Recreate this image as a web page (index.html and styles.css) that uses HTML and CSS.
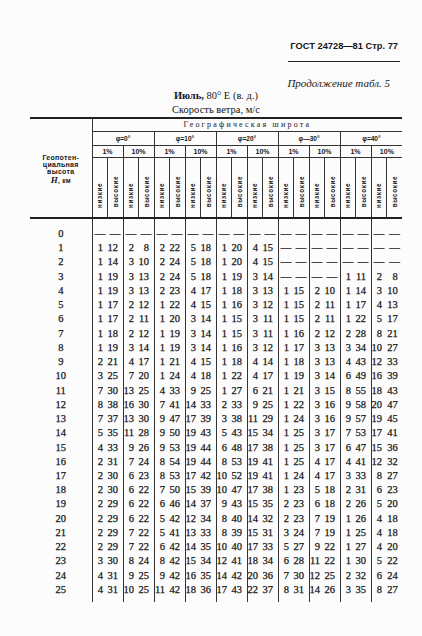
FILE: index.html
```html
<!DOCTYPE html>
<html lang="ru">
<head>
<meta charset="utf-8">
<link rel="stylesheet" href="styles.css">
</head>
<body>
<div class="page">
  <div class="runhead"><span class="gost">ГОСТ 24728—81 Стр. 77</span></div>
  <p class="cont">Продолжение табл. 5</p>
  <p class="caption title"><b>Июль,</b> 80° Е (в. д.)</p>
  <p class="caption">Скорость ветра, м/с</p>
  <table class="data">
    <colgroup>
      <col class="c0">
      <col><col><col><col><col><col><col><col><col><col>
      <col><col><col><col><col><col><col><col><col><col>
    </colgroup>
    <thead>
      <tr class="geo-row"><th class="hcol" rowspan="4">Геопотен-<br>циальная<br>высота<br><span class="h"><i>H</i>, км</span></th><th class="geo" colspan="20">Географическая широта</th></tr>
      <tr class="phi"><th colspan="4">φ=0°</th><th colspan="4">φ=10°</th><th colspan="4">φ=20°</th><th colspan="4">φ—30°</th><th colspan="4">φ=40°</th></tr>
      <tr class="pct"><th colspan="2">1%</th><th colspan="2">10%</th><th colspan="2">1%</th><th colspan="2">10%</th><th colspan="2">1%</th><th colspan="2">10%</th><th colspan="2">1%</th><th colspan="2">10%</th><th colspan="2">1%</th><th colspan="2">10%</th></tr>
      <tr class="rot">
        <th><span>низкие</span></th><th><span>высокие</span></th><th><span>низкие</span></th><th><span>высокие</span></th>
        <th><span>низкие</span></th><th><span>высокие</span></th><th><span>низкие</span></th><th><span>высокие</span></th>
        <th><span>низкие</span></th><th><span>высокие</span></th><th><span>низкие</span></th><th><span>высокие</span></th>
        <th><span>низкие</span></th><th><span>высокие</span></th><th><span>низкие</span></th><th><span>высокие</span></th>
        <th><span>низкие</span></th><th><span>высокие</span></th><th><span>низкие</span></th><th><span>высокие</span></th>
      </tr>
    </thead>
    <tbody>
      <tr class="first"><td>0</td><td class="d">—</td><td class="d">—</td><td class="d">—</td><td class="d">—</td><td class="d">—</td><td class="d">—</td><td class="d">—</td><td class="d">—</td><td class="d">—</td><td class="d">—</td><td class="d">—</td><td class="d">—</td><td class="d">—</td><td class="d">—</td><td class="d">—</td><td class="d">—</td><td class="d">—</td><td class="d">—</td><td class="d">—</td><td class="d">—</td></tr>
      <tr><td>1</td><td>1</td><td>12</td><td>2</td><td>8</td><td>2</td><td>22</td><td>5</td><td>18</td><td>1</td><td>20</td><td>4</td><td>15</td><td class="d">—</td><td class="d">—</td><td class="d">—</td><td class="d">—</td><td class="d">—</td><td class="d">—</td><td class="d">—</td><td class="d">—</td></tr>
      <tr><td>2</td><td>1</td><td>14</td><td>3</td><td>10</td><td>2</td><td>24</td><td>5</td><td>18</td><td>1</td><td>20</td><td>4</td><td>15</td><td class="d">—</td><td class="d">—</td><td class="d">—</td><td class="d">—</td><td class="d">—</td><td class="d">—</td><td class="d">—</td><td class="d">—</td></tr>
      <tr><td>3</td><td>1</td><td>19</td><td>3</td><td>13</td><td>2</td><td>24</td><td>5</td><td>18</td><td>1</td><td>19</td><td>3</td><td>14</td><td class="d">—</td><td class="d">—</td><td class="d">—</td><td class="d">—</td><td>1</td><td>11</td><td>2</td><td>8</td></tr>
      <tr><td>4</td><td>1</td><td>19</td><td>3</td><td>13</td><td>2</td><td>23</td><td>4</td><td>17</td><td>1</td><td>18</td><td>3</td><td>13</td><td>1</td><td>15</td><td>2</td><td>10</td><td>1</td><td>14</td><td>3</td><td>10</td></tr>
      <tr><td>5</td><td>1</td><td>17</td><td>2</td><td>12</td><td>1</td><td>22</td><td>4</td><td>15</td><td>1</td><td>16</td><td>3</td><td>12</td><td>1</td><td>15</td><td>2</td><td>11</td><td>1</td><td>17</td><td>4</td><td>13</td></tr>
      <tr><td>6</td><td>1</td><td>17</td><td>2</td><td>11</td><td>1</td><td>20</td><td>3</td><td>14</td><td>1</td><td>15</td><td>3</td><td>11</td><td>1</td><td>15</td><td>2</td><td>11</td><td>1</td><td>22</td><td>5</td><td>17</td></tr>
      <tr><td>7</td><td>1</td><td>18</td><td>2</td><td>12</td><td>1</td><td>19</td><td>3</td><td>14</td><td>1</td><td>15</td><td>3</td><td>11</td><td>1</td><td>16</td><td>2</td><td>12</td><td>2</td><td>28</td><td>8</td><td>21</td></tr>
      <tr><td>8</td><td>1</td><td>19</td><td>3</td><td>14</td><td>1</td><td>19</td><td>3</td><td>14</td><td>1</td><td>16</td><td>3</td><td>12</td><td>1</td><td>17</td><td>3</td><td>13</td><td>3</td><td>34</td><td>10</td><td>27</td></tr>
      <tr><td>9</td><td>2</td><td>21</td><td>4</td><td>17</td><td>1</td><td>21</td><td>4</td><td>15</td><td>1</td><td>18</td><td>4</td><td>14</td><td>1</td><td>18</td><td>3</td><td>13</td><td>4</td><td>43</td><td>12</td><td>33</td></tr>
      <tr><td>10</td><td>3</td><td>25</td><td>7</td><td>20</td><td>1</td><td>24</td><td>4</td><td>18</td><td>1</td><td>22</td><td>4</td><td>17</td><td>1</td><td>19</td><td>3</td><td>14</td><td>6</td><td>49</td><td>16</td><td>39</td></tr>
      <tr><td>11</td><td>7</td><td>30</td><td>13</td><td>25</td><td>4</td><td>33</td><td>9</td><td>25</td><td>1</td><td>27</td><td>6</td><td>21</td><td>1</td><td>21</td><td>3</td><td>15</td><td>8</td><td>55</td><td>18</td><td>43</td></tr>
      <tr><td>12</td><td>8</td><td>38</td><td>16</td><td>30</td><td>7</td><td>41</td><td>14</td><td>33</td><td>2</td><td>33</td><td>9</td><td>25</td><td>1</td><td>22</td><td>3</td><td>16</td><td>9</td><td>58</td><td>20</td><td>47</td></tr>
      <tr><td>13</td><td>7</td><td>37</td><td>13</td><td>30</td><td>9</td><td>47</td><td>17</td><td>39</td><td>3</td><td>38</td><td>11</td><td>29</td><td>1</td><td>24</td><td>3</td><td>16</td><td>9</td><td>57</td><td>19</td><td>45</td></tr>
      <tr><td>14</td><td>5</td><td>35</td><td>11</td><td>28</td><td>9</td><td>50</td><td>19</td><td>43</td><td>5</td><td>43</td><td>15</td><td>34</td><td>1</td><td>25</td><td>3</td><td>17</td><td>7</td><td>53</td><td>17</td><td>41</td></tr>
      <tr><td>15</td><td>4</td><td>33</td><td>9</td><td>26</td><td>9</td><td>53</td><td>19</td><td>44</td><td>6</td><td>48</td><td>17</td><td>38</td><td>1</td><td>25</td><td>3</td><td>17</td><td>6</td><td>47</td><td>15</td><td>36</td></tr>
      <tr><td>16</td><td>2</td><td>31</td><td>7</td><td>24</td><td>8</td><td>54</td><td>19</td><td>44</td><td>8</td><td>53</td><td>19</td><td>41</td><td>1</td><td>25</td><td>4</td><td>17</td><td>4</td><td>41</td><td>12</td><td>32</td></tr>
      <tr><td>17</td><td>2</td><td>30</td><td>6</td><td>23</td><td>8</td><td>53</td><td>17</td><td>42</td><td>10</td><td>52</td><td>19</td><td>41</td><td>1</td><td>24</td><td>4</td><td>17</td><td>3</td><td>33</td><td>8</td><td>27</td></tr>
      <tr><td>18</td><td>2</td><td>30</td><td>6</td><td>22</td><td>7</td><td>50</td><td>15</td><td>39</td><td>10</td><td>47</td><td>17</td><td>38</td><td>1</td><td>23</td><td>5</td><td>18</td><td>2</td><td>31</td><td>6</td><td>23</td></tr>
      <tr><td>19</td><td>2</td><td>29</td><td>6</td><td>22</td><td>6</td><td>46</td><td>14</td><td>37</td><td>9</td><td>43</td><td>15</td><td>35</td><td>2</td><td>23</td><td>6</td><td>18</td><td>2</td><td>26</td><td>5</td><td>20</td></tr>
      <tr><td>20</td><td>2</td><td>29</td><td>6</td><td>22</td><td>5</td><td>42</td><td>12</td><td>34</td><td>8</td><td>40</td><td>14</td><td>32</td><td>2</td><td>23</td><td>7</td><td>19</td><td>1</td><td>26</td><td>4</td><td>18</td></tr>
      <tr><td>21</td><td>2</td><td>29</td><td>7</td><td>22</td><td>5</td><td>41</td><td>13</td><td>33</td><td>8</td><td>39</td><td>15</td><td>31</td><td>3</td><td>24</td><td>7</td><td>19</td><td>1</td><td>25</td><td>4</td><td>18</td></tr>
      <tr><td>22</td><td>2</td><td>29</td><td>7</td><td>22</td><td>6</td><td>42</td><td>14</td><td>35</td><td>10</td><td>40</td><td>17</td><td>33</td><td>5</td><td>27</td><td>9</td><td>22</td><td>1</td><td>27</td><td>4</td><td>20</td></tr>
      <tr><td>23</td><td>3</td><td>30</td><td>8</td><td>24</td><td>8</td><td>42</td><td>15</td><td>34</td><td>12</td><td>41</td><td>18</td><td>34</td><td>6</td><td>28</td><td>11</td><td>22</td><td>1</td><td>30</td><td>5</td><td>22</td></tr>
      <tr><td>24</td><td>4</td><td>31</td><td>9</td><td>25</td><td>9</td><td>42</td><td>16</td><td>35</td><td>14</td><td>42</td><td>20</td><td>36</td><td>7</td><td>30</td><td>12</td><td>25</td><td>2</td><td>32</td><td>6</td><td>24</td></tr>
      <tr><td>25</td><td>4</td><td>31</td><td>10</td><td>25</td><td>11</td><td>42</td><td>18</td><td>36</td><td>17</td><td>43</td><td>22</td><td>37</td><td>8</td><td>31</td><td>14</td><td>26</td><td>3</td><td>35</td><td>8</td><td>27</td></tr>
      <tr class="end"><td></td><td></td><td></td><td></td><td></td><td></td><td></td><td></td><td></td><td></td><td></td><td></td><td></td><td></td><td></td><td></td><td></td><td></td><td></td><td></td><td></td></tr>
    </tbody>
  </table>
</div>
</body>
</html>
```
FILE: styles.css
```css
html, body {
  margin: 0;
  padding: 0;
  background: #fcfcfc;
}
body {
  color: #161616;
  font-family: "Liberation Serif", "Times New Roman", serif;
}
.page {
  width: 422px;
  height: 636px;
  box-sizing: border-box;
  padding-top: 40px;
  overflow: hidden;
}
.runhead {
  display: flex;
  justify-content: flex-end;
  padding-right: 22px;
}
.gost {
  font-family: "Liberation Sans", Arial, sans-serif;
  font-weight: bold;
  font-size: 9.3px;
  line-height: 12px;
  padding: 0 2px 9px 2px;
  border-bottom: 1.5px solid #222;
}
.cont {
  margin: 15px 32px 0 0;
  text-align: right;
  font-style: italic;
  font-size: 11px;
  line-height: 12px;
}
.caption {
  margin: 0 0 0 30px;
  width: 372px;
  text-align: center;
  font-size: 10.5px;
  line-height: 13.5px;
}
.title b {
  font-weight: bold;
}
.data {
  margin: 0.5px 0 0 30px;
  width: 372px;
  table-layout: fixed;
  border-collapse: collapse;
}
.data col {
  width: 15.5px;
}
.data col.c0 {
  width: 62px;
}
.data th {
  padding: 0;
  font-weight: normal;
  border-left: 1px solid #333;
  white-space: nowrap;
  overflow: hidden;
}
.geo-row th {
  border-top: 2px solid #222;
}
.data th.hcol {
  border-left: none;
  border-bottom: 2px solid #222;
  vertical-align: top;
  padding-top: 35px;
  font-family: "Liberation Sans", Arial, sans-serif;
  font-weight: bold;
  font-size: 7px;
  line-height: 7.4px;
  letter-spacing: 0.3px;
}
.hcol .h {
  display: inline-block;
  font-size: 6.5px;
  line-height: 8px;
}
.hcol .h i {
  font-family: "Liberation Serif", serif;
  font-size: 9px;
}
.geo {
  height: 12px;
  border-bottom: 1px solid #333;
  font-size: 8px;
  letter-spacing: 2.2px;
}
.phi th {
  height: 13px;
  border-bottom: 1px solid #333;
  font-family: "Liberation Sans", Arial, sans-serif;
  font-weight: bold;
  font-size: 6.5px;
}
.pct th {
  height: 11px;
  border-bottom: 1px solid #333;
  font-family: "Liberation Sans", Arial, sans-serif;
  font-weight: bold;
  font-size: 7px;
}
.rot th {
  height: 54px;
  vertical-align: bottom;
  padding-bottom: 5px;
  border-bottom: 2px solid #222;
}
.rot span {
  display: inline-block;
  writing-mode: vertical-rl;
  transform: rotate(180deg);
  font-family: "Liberation Sans", Arial, sans-serif;
  font-weight: bold;
  font-size: 6.3px;
  line-height: 7px;
  letter-spacing: 0.6px;
}
.data td {
  padding: 0 4.5px 0 0;
  height: 14.24px;
  font-size: 10.5px;
  line-height: 14.24px;
  text-align: right;
  white-space: nowrap;
  overflow: visible;
  -webkit-text-stroke: 0.25px #161616;
}
.data td:first-child {
  text-align: center;
  padding: 0;
}
.data td:nth-child(even) {
  border-left: 1px solid #333;
}
.data td.d {
  text-align: center;
  padding: 0;
}
.data tr.first td {
  padding-top: 8.5px;
}
.data tr.end td {
  height: 5px;
  line-height: 5px;
}
```
